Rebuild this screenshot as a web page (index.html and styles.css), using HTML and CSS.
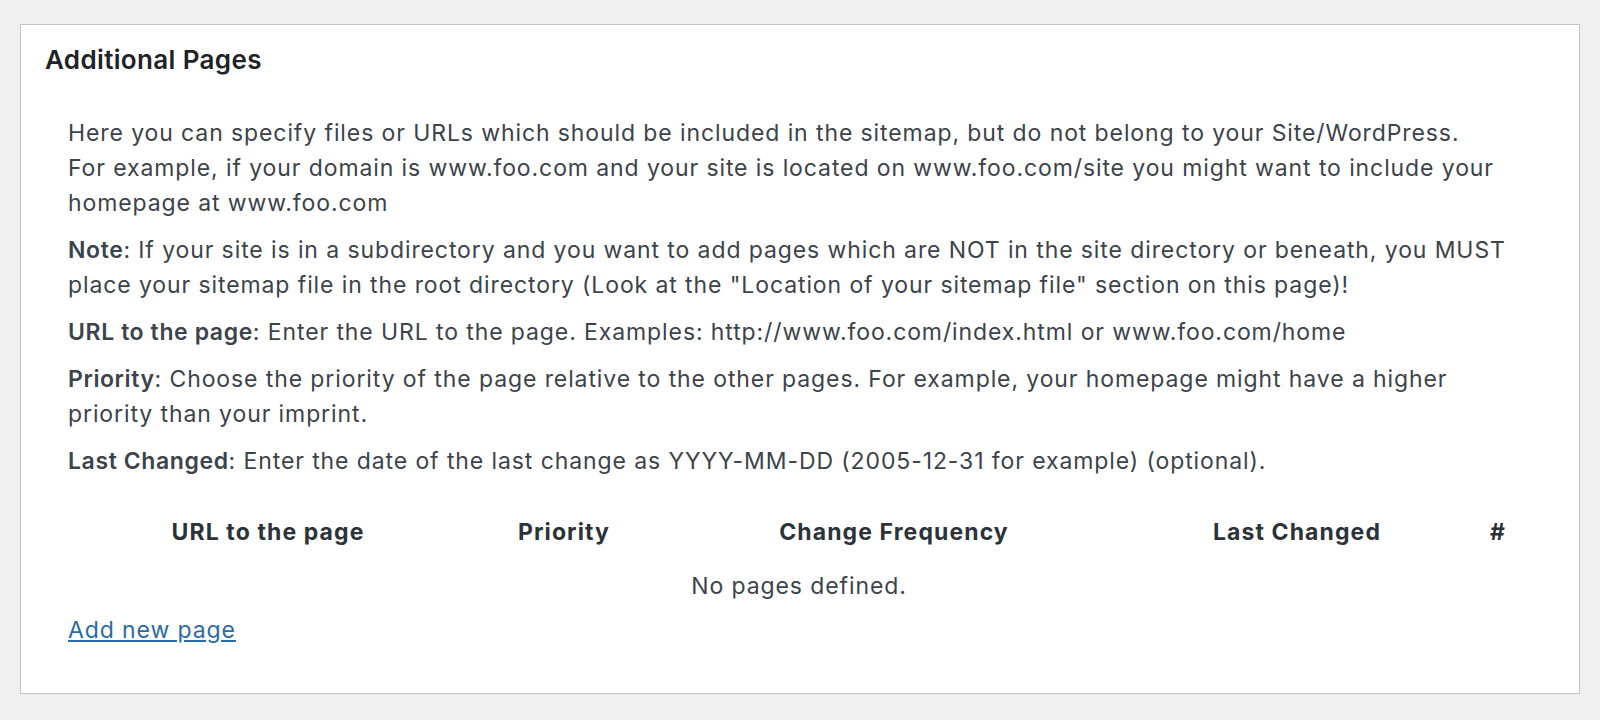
FILE: index.html
```html
<!DOCTYPE html>
<html lang="en">
<head>
    <meta charset="UTF-8">
    <meta name="viewport" content="width=device-width, initial-scale=1.0">
    <title>Additional Pages</title>
    <link rel="stylesheet" href="styles.css">
</head>
<body>
    <!-- Additional pages box -->
    <div class="postbox">
        <h2 class="hndle">Additional Pages</h2>
        <div class="inside">
            <p>Here you can specify files or URLs which should be included in the sitemap, but do not belong to your Site/WordPress.<br>
            For example, if your domain is www.foo.com and your site is located on www.foo.com/site you might want to include your homepage at www.foo.com</p>
            <p><b>Note</b>: If your site is in a subdirectory and you want to add pages which are NOT in the site directory or beneath, you MUST place your sitemap file in the root directory (Look at the &quot;Location of your sitemap file&quot; section on this page)!</p>
            <p><b>URL to the page</b>: Enter the URL to the page. Examples: http://www.foo.com/index.html or www.foo.com/home</p>
            <p><b>Priority</b>: Choose the priority of the page relative to the other pages. For example, your homepage might have a higher priority than your imprint.</p>
            <p><b>Last Changed</b>: Enter the date of the last change as YYYY-MM-DD (2005-12-31 for example) (optional).</p>

            <table class="pages-table">
                <thead>
                    <tr>
                        <th class="col-url">URL to the page</th>
                        <th class="col-priority">Priority</th>
                        <th class="col-freq">Change Frequency</th>
                        <th class="col-changed">Last Changed</th>
                        <th class="col-num">#</th>
                    </tr>
                </thead>
                <tbody>
                    <tr>
                        <td colspan="5">No pages defined.</td>
                    </tr>
                </tbody>
            </table>
            <a href="#" class="add-link">Add new page</a>
        </div>
    </div>
</body>
</html>
```

FILE: styles.css
```css
/* Global styles */
body {
    background: #f0f0f1;
    font-family: Inter, 'Noto Sans', sans-serif;
    color: #3c434a;
    margin: 0;
    padding: 24px 20px 0 20px;
}

/* Box */
.postbox {
    background-color: #fff;
    border: 1px solid #c3c4c7;
    height: 668px;
}

.hndle {
    margin: 20px 0 0 24px;
    font-size: 26px;
    line-height: 30px;
    font-weight: 600;
    letter-spacing: 0.35px;
    color: #1d2327;
}

.inside {
    padding: 41px 0 0 47px;
    width: 1445px;
    font-size: 23px;
    line-height: 35px;
    letter-spacing: 0.9px;
}

.inside p {
    margin: 0 0 12px 0;
}

.inside b {
    font-weight: 600;
    letter-spacing: 0.6px;
}

/* Pages table */
.pages-table {
    width: 1462px;
    border-collapse: collapse;
    margin-top: 36px;
    font-size: 23px;
    line-height: 35px;
}

.pages-table th {
    padding: 0;
    font-weight: 700;
    letter-spacing: 1.1px;
    color: #2c3338;
    text-align: center;
}

.pages-table td {
    padding: 19px 0 0 0;
    text-align: center;
}

.col-url { width: 400px; }
.col-priority { width: 192px; }
.col-freq { width: 468px; }
.col-changed { width: 338px; }
.col-num { width: 64px; }

.add-link {
    display: inline-block;
    margin-top: 9px;
    color: #2a6aa6;
    text-decoration: underline;
}
```
